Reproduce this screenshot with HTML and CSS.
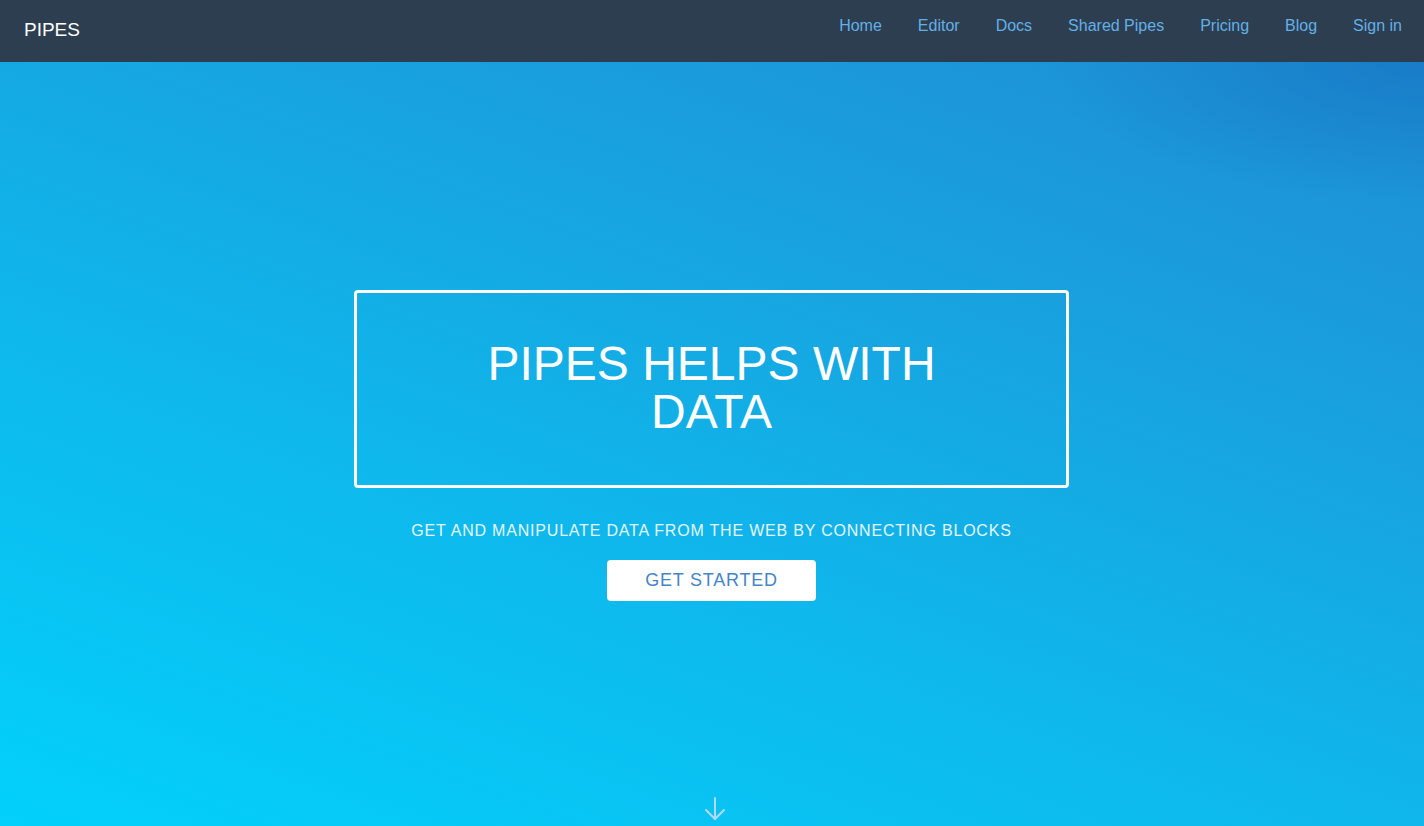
FILE: index.html
```html
<!DOCTYPE html>
<html lang="en">
<head>
  <meta charset="UTF-8">
  <meta name="viewport" content="width=device-width, initial-scale=1.0">
  <title>Pipes</title>
  <link rel="stylesheet" href="styles.css">
</head>
<body>
  <nav class="navbar">
    <a class="brand" href="#">PIPES</a>
    <ul class="nav-links">
      <li><a href="#">Home</a></li>
      <li><a href="#">Editor</a></li>
      <li><a href="#">Docs</a></li>
      <li><a href="#">Shared Pipes</a></li>
      <li><a href="#">Pricing</a></li>
      <li><a href="#">Blog</a></li>
      <li><a href="#">Sign in</a></li>
    </ul>
  </nav>

  <header class="hero">
    <div class="hero-content">
      <div class="hero-box">
        <h1>PIPES HELPS WITH DATA</h1>
      </div>
      <p class="tagline">Get and manipulate data from the web by connecting blocks</p>
      <a class="start-btn" href="#">GET STARTED</a>
    </div>
    <a class="scroll-down" href="#">
      <svg width="24" height="26" viewBox="0 0 24 26" fill="none" stroke="currentColor" stroke-width="2" stroke-linecap="round" stroke-linejoin="round">
        <line x1="12" y1="2" x2="12" y2="23"/>
        <polyline points="3,14 12,23 21,14"/>
      </svg>
    </a>
  </header>
</body>
</html>
```

FILE: styles.css
```css
html, body {
  margin: 0;
  padding: 0;
}
body {
  font-family: "Liberation Sans", Arial, sans-serif;
  background-color: #0fb6ec;
}
a {
  text-decoration: none;
}
.navbar {
  height: 62px;
  background-color: #2d3e50;
  display: flex;
  align-items: center;
  justify-content: space-between;
  padding: 0 4px 0 24px;
  box-sizing: border-box;
}
.brand {
  color: #ffffff;
  font-size: 19px;
  margin-top: -2px;
}
.nav-links {
  list-style: none;
  display: flex;
  margin: 0;
  padding: 0;
  margin-top: -11px;
}
.nav-links a {
  display: block;
  padding: 0 18px;
  font-size: 16px;
  color: #62b0e8;
}
.hero {
  height: calc(100vh - 62px);
  background:
    radial-gradient(ellipse 380px 140px at 100% 0%, rgba(20, 110, 190, 0.55), rgba(20, 110, 190, 0) 100%),
    linear-gradient(20deg, #02d1fb 0%, #0fb7ec 40%, #1a9edd 75%, #1e8dd4 100%);
  display: flex;
  flex-direction: column;
  align-items: center;
  justify-content: center;
  position: relative;
}
.hero-content {
  display: flex;
  flex-direction: column;
  align-items: center;
  margin: 2px 1px 0 0;
}
.hero-box {
  width: 715px;
  box-sizing: border-box;
  border: 3px solid #ffffff;
  border-radius: 4px;
  padding: 47px 120px 49px;
}
.hero-box h1 {
  margin: 0;
  font-weight: normal;
  font-size: 48px;
  line-height: 48px;
  color: #ffffff;
  text-align: center;
}
.tagline {
  margin: 33px 0 0;
  font-size: 16px;
  letter-spacing: 0.8px;
  text-transform: uppercase;
  color: #e4f6ff;
  line-height: 20px;
}
.start-btn {
  margin-top: 19px;
  width: 209px;
  height: 41px;
  display: flex;
  align-items: center;
  justify-content: center;
  background-color: #ffffff;
  border-radius: 4px;
  color: #4584c9;
  font-size: 18px;
  letter-spacing: 0.75px;
}
.scroll-down {
  position: absolute;
  bottom: 4px;
  left: 50%;
  margin-left: -9px;
  color: #b4d9ef;
  display: block;
  width: 24px;
  height: 26px;
}
```
